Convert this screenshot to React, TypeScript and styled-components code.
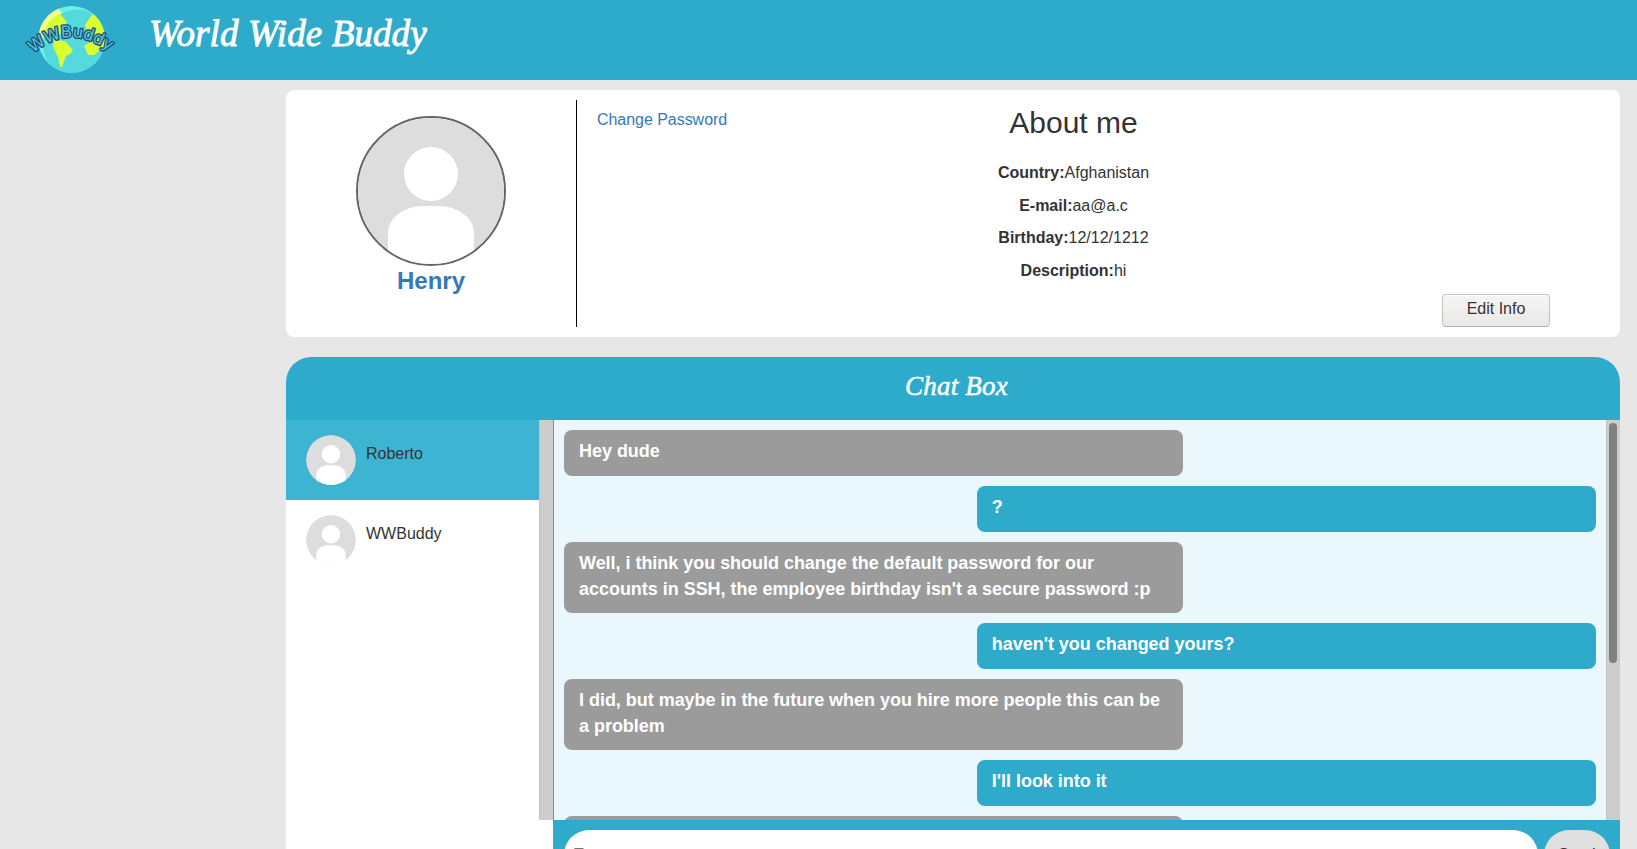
import React from "react";
import styled, { createGlobalStyle } from "styled-components";

const teal = "#2eabca";
const script = `"Z003", "URW Chancery L", "Monotype Corsiva", "Liberation Serif", cursive`;

const GlobalStyle = createGlobalStyle`
  *, *::before, *::after { box-sizing: border-box; }
  html, body { margin: 0; height: 100%; overflow: hidden; }
  body {
    background: #e7e7e7;
    color: #333;
    font: 16px/1.42857 "Liberation Sans", Arial, sans-serif;
  }
`;

const Page = styled.div`
  height: 849px;
  overflow: hidden;
`;

const TopBar = styled.header`
  display: flex;
  height: 80px;
  padding-left: 20px;
  background: ${teal};
`;

const Logo = styled.svg`
  width: 100px;
  height: 80px;
  flex: none;
`;

const SiteTitle = styled.h1`
  margin: 0 0 0 29px;
  color: #fff;
  font: italic 400 37px/68px ${script};
  letter-spacing: 0.1px;
  white-space: nowrap;
  -webkit-text-stroke: 0.9px #fff;
`;

const Main = styled.main`
  width: 1334px;
  margin: 10px 0 0 286px;
`;

const ProfileCard = styled.section`
  display: flex;
  height: 247px;
  padding: 10px 70px 10px 0;
  border-radius: 8px;
  background: #fff;
`;

const Identity = styled.div`
  display: flex;
  flex-direction: column;
  align-items: center;
  width: 291px;
  padding-top: 16px;
  border-right: 1px solid #000;
`;

const UserName = styled.a`
  color: #337ab7;
  font-size: 24px;
  font-weight: 700;
  line-height: 30px;
`;

const Details = styled.div`
  display: grid;
  grid-template-rows: 1fr 33px;
  flex: 1;
  padding-left: 20px;
`;

const DetailsBody = styled.div`
  display: grid;
  grid-template-columns: 1fr auto 1fr;
`;

const PasswordLink = styled.a`
  padding-top: 9px;
  color: #337ab7;
  letter-spacing: -0.04px;
`;

const About = styled.div`
  text-align: center;
`;

const AboutTitle = styled.h2`
  margin: 6px 0 23px;
  font-size: 30px;
  font-weight: 400;
  line-height: 33px;
`;

const Fact = styled.p`
  margin: 0 0 9.8px;
`;

const EditButton = styled.button`
  justify-self: end;
  width: 108px;
  height: 33px;
  padding: 0 0 3px;
  border: 1px solid #c9c3bf;
  border-bottom-color: #b8b0aa;
  border-radius: 4px;
  background: linear-gradient(#f6f5f4, #eae8e6);
  box-shadow: inset 0 1px #fff;
  color: #333;
  font: inherit;
`;

const ChatCard = styled.section`
  margin-top: 20px;
  height: 540px;
  overflow: hidden;
  border-radius: 25px 25px 0 0;
  background: #fff;
`;

const ChatHeader = styled.h2`
  height: 63px;
  margin: 0;
  padding-left: 7px;
  background: ${teal};
  color: #fff;
  font: italic 400 27px/58px ${script};
  letter-spacing: 0.2px;
  text-align: center;
  -webkit-text-stroke: 0.5px #fff;
`;

const ChatBody = styled.div`
  display: flex;
`;

const Contacts = styled.div`
  display: flex;
  width: 267px;
  height: 400px;
`;

const ContactList = styled.div`
  width: 253px;
`;

const Contact = styled.div<{ $active?: boolean }>`
  display: flex;
  gap: 10px;
  height: 80px;
  padding: 15px 20px;
  background: ${({ $active }) => ($active ? "#3eb4d3" : "#fff")};
`;

const ContactName = styled.span`
  padding-top: 8px;
`;

const Track = styled.div`
  width: 14px;
  height: 400px;
  padding: 3px;
  border-left: 1px solid #c6c6c6;
  background: #cdcdcd;
`;

const Thumb = styled.div`
  width: 8px;
  height: 240px;
  margin-left: -1px;
  border-radius: 4px;
  background: #7e8181;
`;

const Conversation = styled.div`
  width: 1067px;
`;

const MessageArea = styled.div`
  display: flex;
  height: 400px;
  border-left: 1px solid ${teal};
  background: #eaf8fe;
`;

const Messages = styled.div`
  display: flex;
  flex-direction: column;
  gap: 10px;
  width: 1052px;
  height: 400px;
  padding: 10px 10px 0;
  overflow: hidden;
`;

const Bubble = styled.div<{ $mine?: boolean; $lines: number }>`
  flex: none;
  align-self: ${({ $mine }) => ($mine ? "flex-end" : "flex-start")};
  width: 60%;
  height: ${({ $lines }) => 21 + 25 * $lines}px;
  padding: 8px 15px 0;
  border-radius: 8px;
  background: ${({ $mine }) => ($mine ? teal : "#9b9b9b")};
  color: #fff;
  font-size: 18px;
  font-weight: 700;
  line-height: 26px;
  letter-spacing: -0.03px;
`;

const Composer = styled.form`
  display: flex;
  gap: 6px;
  height: 70px;
  padding: 10px 10px 10px 11px;
  background: ${teal};
`;

const MessageInput = styled.input`
  flex: 1;
  height: 50px;
  padding: 0 10px;
  border: 0;
  border-radius: 25px;
  background: #fff;
  font: inherit;
`;

const SendButton = styled.button`
  width: 66px;
  height: 50px;
  padding: 0;
  border: 0;
  border-radius: 25px;
  background: #e0e0e0;
  color: #333;
  font: inherit;
`;

const AvatarSvg = styled.svg<{ $size: number; $ring?: boolean }>`
  flex: none;
  width: ${({ $size }) => $size}px;
  height: ${({ $size }) => $size}px;
  border: ${({ $ring }) => ($ring ? "2px solid #666" : "0")};
  border-radius: 50%;
`;

const Avatar = ({ size, ring }: { size: number; ring?: boolean }) => (
  <AvatarSvg $size={size} $ring={ring} viewBox="0 0 146 146">
    <circle cx="73" cy="73" r="73" fill="#ddd" />
    <circle cx="73" cy="56" r="27" fill="#fff" />
    <path d="M30 146V115C30 100 46 88 66 88H80C100 88 116 100 116 115V146Z" fill="#fff" />
  </AvatarSvg>
);

const Globe = () => (
  <Logo viewBox="20 0 100 80">
    <defs>
      <clipPath id="globe"><circle cx="71.7" cy="39.4" r="33.4" /></clipPath>
      <path id="arc" d="M33.500 53.500Q70 21 113 54" />
    </defs>
    <g clipPath="url(#globe)">
      <rect x="38" y="5" width="68" height="70" fill="#6bf0eb" />
      <path d="M38 39V6H57L62 14L67 22L63 31L57 38L46 45Z" fill="#f5ff8c" />
      <circle cx="77.500" cy="44" r="34.500" fill="#56d9dc" />
      <path d="M60 14L67 22L64 31L57 37L50 39L43 37Q45 20 60 14Z" fill="#d9ff34" />
      <path d="M92.500 14L85 25L88 34L101 39L90 42L84 46L88 55H94L108 44V16Z" fill="#d9ff34" />
      <path d="M54 40L65 41L73 50L70 54L66 56L62 67H60.500L58 57L53 47Z" fill="#d9ff34" />
    </g>
    <text
      fontFamily="'DejaVu Sans', sans-serif"
      fontSize="16.500"
      fill="#4bc6dd"
      stroke="#234a70"
      strokeWidth="2.600"
      strokeLinejoin="round"
      paintOrder="stroke"
    >
      <textPath href="#arc" textLength="83">WWBuddy</textPath>
    </text>
  </Logo>
);

const facts = [
  ["Country:", "Afghanistan"],
  ["E-mail:", "aa@a.c"],
  ["Birthday:", "12/12/1212"],
  ["Description:", "hi"],
];

const messages = [
  { text: "Hey dude" },
  { text: "?", mine: true },
  {
    text: "Well, i think you should change the default password for our accounts in SSH, the employee birthday isn't a secure password :p",
    lines: 2,
  },
  { text: "haven't you changed yours?", mine: true },
  { text: "I did, but maybe in the future when you hire more people this can be a problem", lines: 2 },
  { text: "I'll look into it", mine: true },
  { text: "" },
];

export default function App() {
  return (
    <Page>
      <GlobalStyle />
      <TopBar>
        <Globe />
        <SiteTitle>World Wide Buddy</SiteTitle>
      </TopBar>
      <Main>
        <ProfileCard>
          <Identity>
            <Avatar size={150} ring />
            <UserName>Henry</UserName>
          </Identity>
          <Details>
            <DetailsBody>
              <PasswordLink>Change Password</PasswordLink>
              <About>
                <AboutTitle>About me</AboutTitle>
                {facts.map(([label, value]) => (
                  <Fact key={label}><b>{label}</b>{value}</Fact>
                ))}
              </About>
            </DetailsBody>
            <EditButton>Edit Info</EditButton>
          </Details>
        </ProfileCard>
        <ChatCard>
          <ChatHeader>Chat Box</ChatHeader>
          <ChatBody>
            <Contacts>
              <ContactList>
                <Contact $active>
                  <Avatar size={50} />
                  <ContactName>Roberto</ContactName>
                </Contact>
                <Contact>
                  <Avatar size={50} />
                  <ContactName>WWBuddy</ContactName>
                </Contact>
              </ContactList>
              <Track />
            </Contacts>
            <Conversation>
              <MessageArea>
                <Messages>
                  {messages.map(({ text, mine, lines = 1 }, i) => (
                    <Bubble key={i} $mine={mine} $lines={lines}>{text}</Bubble>
                  ))}
                </Messages>
                <Track><Thumb /></Track>
              </MessageArea>
              <Composer>
                <MessageInput placeholder="Type..." />
                <SendButton type="button">Send</SendButton>
              </Composer>
            </Conversation>
          </ChatBody>
        </ChatCard>
      </Main>
    </Page>
  );
}
